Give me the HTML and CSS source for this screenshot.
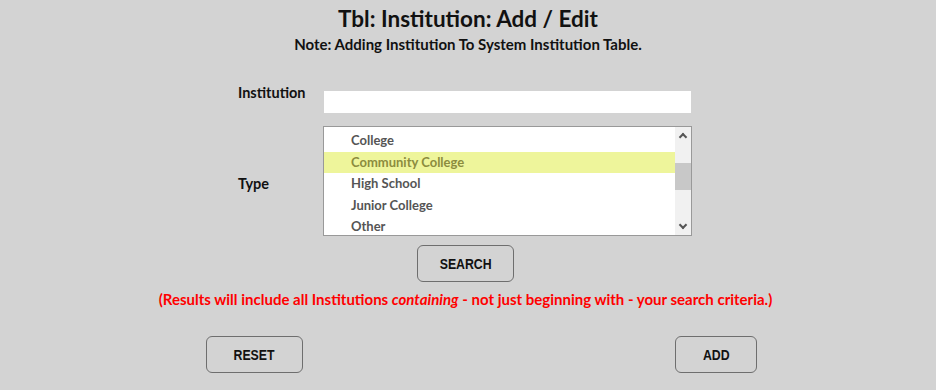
FILE: index.html
```html
<!DOCTYPE html>
<html lang="en">
<head>
    <meta charset="UTF-8">
    <meta name="viewport" content="width=device-width, initial-scale=1.0">
    <title>Tbl: Institution: Add / Edit</title>
    <link rel="stylesheet" href="styles.css">
</head>
<body>
    <div class="header">
        <h1>Tbl: Institution: Add / Edit</h1>
        <p class="note">Note: Adding Institution To System Institution Table.</p>
    </div>

    <!-- form fields -->
    <div class="form">
        <label class="field-label inst-label" for="institution">Institution</label>
        <input type="text" id="institution" class="text-input">

        <div class="field-label type-label">Type</div>
        <div class="listbox">
            <div class="list-items">
                <div class="list-item">College</div>
                <div class="list-item selected">Community College</div>
                <div class="list-item">High School</div>
                <div class="list-item">Junior College</div>
                <div class="list-item">Other</div>
            </div>
            <div class="scrollbar">
                <span class="arrow up"></span>
                <span class="thumb"></span>
                <span class="arrow down"></span>
            </div>
        </div>
    </div>

    <div class="search-row">
        <button class="btn search-btn"><span>SEARCH</span></button>
    </div>
    <p class="hint">(Results will include all Institutions <em>containing</em> - not just beginning with - your search criteria.)</p>

    <!-- bottom buttons -->
    <div class="actions">
        <button class="btn reset-btn"><span>RESET</span></button>
        <button class="btn add-btn"><span>ADD</span></button>
    </div>
</body>
</html>
```

FILE: styles.css
```css
body {
    font-family: Lato, "Open Sans", sans-serif;
    margin: 0;
    padding: 0;
    background-color: #d3d3d3;
    color: #111;
}

.header {
    text-align: center;
    padding-top: 5px;
}

.header h1 {
    margin: 0;
    font-size: 22.5px;
    font-weight: bold;
    line-height: 27px;
}

.header .note {
    margin: 3px 0 0;
    font-size: 15px;
    font-weight: bold;
    line-height: 18px;
}

.form {
    display: grid;
    grid-template-columns: 85px 369px;
    row-gap: 13px;
    padding-left: 238px;
    margin-top: 38px;
}

.field-label {
    font-size: 14.5px;
    font-weight: bold;
    line-height: 17px;
}

.inst-label {
    margin-top: -7px;
}

.type-label {
    align-self: start;
    margin-top: 49px;
}

.text-input {
    width: 367px;
    height: 22px;
    box-sizing: border-box;
    border: none;
    background-color: white;
    margin: 0 1px;
    padding: 0 6px;
}

.listbox {
    display: flex;
    height: 110px;
    box-sizing: border-box;
    border: 1px solid #999;
    background-color: white;
    overflow: hidden;
}

.list-items {
    flex-grow: 1;
    padding-top: 3px;
}

.list-item {
    height: 21.5px;
    line-height: 21.5px;
    padding-left: 27px;
    font-size: 13px;
    font-weight: bold;
    color: #555;
}

.list-item.selected {
    background-color: #eef59b;
    color: #8c8c3e;
}

.scrollbar {
    width: 16px;
    background-color: #f1f1f1;
    position: relative;
}

.scrollbar .thumb {
    position: absolute;
    left: 0;
    right: 0;
    top: 36px;
    height: 27px;
    background-color: #c8c8c8;
}

.scrollbar .arrow {
    position: absolute;
    left: 5px;
    width: 4px;
    height: 4px;
    border-left: 2px solid #555;
    border-top: 2px solid #555;
}

.scrollbar .arrow.up {
    top: 7px;
    transform: rotate(45deg);
}

.scrollbar .arrow.down {
    bottom: 7px;
    transform: rotate(225deg);
}

.btn {
    font-family: "Liberation Sans", Arial, sans-serif;
    font-size: 15px;
    font-weight: bold;
    color: #111;
    background-color: transparent;
    border: 1px solid #6e6e6e;
    border-radius: 6px;
    height: 37px;
    padding: 0;
    margin: 0;
}

.btn span {
    display: inline-block;
    transform: scaleX(0.82);
}

.search-row {
    display: flex;
    justify-content: center;
    padding-right: 5px;
    margin-top: 9px;
}

.search-btn {
    width: 97px;
}

.hint {
    margin: 8px 0 0;
    text-align: center;
    font-size: 15px;
    font-weight: bold;
    color: #ff0000;
    line-height: 18px;
    padding-right: 5px;
}

.actions {
    display: flex;
    justify-content: space-between;
    padding: 0 179px 0 206px;
    margin-top: 28px;
}

.reset-btn {
    width: 97px;
}

.add-btn {
    width: 82px;
}
```
